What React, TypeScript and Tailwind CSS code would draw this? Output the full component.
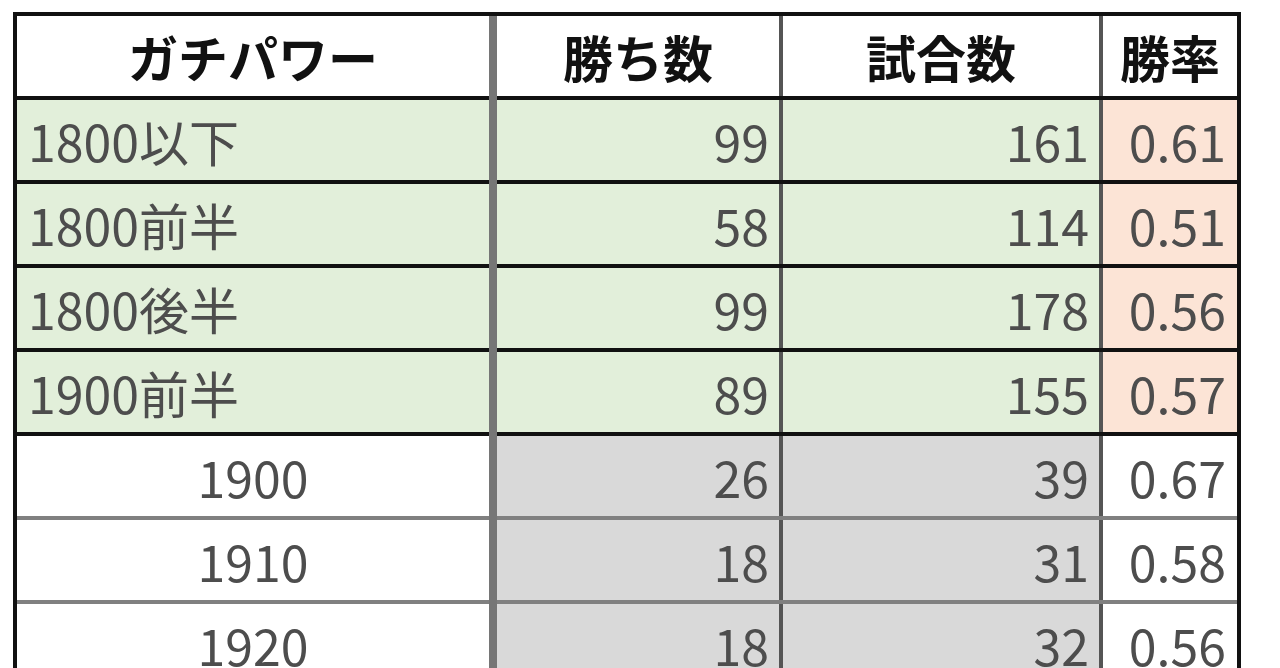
type Row = {
  label: string
  wins: number
  games: number
  rate: string
  tier: 'green' | 'plain'
}

const rows: Row[] = [
  { label: '1800以下', wins: 99, games: 161, rate: '0.61', tier: 'green' },
  { label: '1800前半', wins: 58, games: 114, rate: '0.51', tier: 'green' },
  { label: '1800後半', wins: 99, games: 178, rate: '0.56', tier: 'green' },
  { label: '1900前半', wins: 89, games: 155, rate: '0.57', tier: 'green' },
  { label: '1900', wins: 26, games: 39, rate: '0.67', tier: 'plain' },
  { label: '1910', wins: 18, games: 31, rate: '0.58', tier: 'plain' },
  { label: '1920', wins: 18, games: 32, rate: '0.56', tier: 'plain' },
  { label: '1930', wins: 12, games: 20, rate: '0.60', tier: 'plain' },
]

function Divider() {
  // thick double-ish rule between the first column and the rest
  return <div className="h-[84px] w-[8px] shrink-0 bg-[#767676]" />
}

function HeaderRow() {
  return (
    <div className="flex h-[84px] items-start border-b-4 border-[#111]">
      <div className="flex h-[80px] w-[472px] items-center justify-center bg-white">
        ガチパワー
      </div>
      <Divider />
      <div className="flex h-[80px] w-[286px] items-center justify-center border-r-4 border-[#555] bg-white">
        勝ち数
      </div>
      <div className="flex h-[80px] w-[320px] items-center justify-center border-r-4 border-[#555] bg-white">
        試合数
      </div>
      <div className="flex h-[80px] w-[134px] items-center justify-center bg-white">
        勝率
      </div>
    </div>
  )
}

function DataRow({ row }: { row: Row }) {
  const green = row.tier === 'green'
  return (
    <div
      className={
        green
          ? 'flex h-[84px] items-start border-b-4 border-[#111]'
          : 'flex h-[84px] items-start border-b-4 border-[#808080]'
      }
    >
      {green ? (
        <div className="flex h-[80px] w-[472px] items-center bg-[#e2efda] pl-[11px]">
          {row.label}
        </div>
      ) : (
        <div className="flex h-[80px] w-[472px] items-center justify-center bg-white">
          {row.label}
        </div>
      )}
      <Divider />
      <div
        className={
          green
            ? 'flex h-[80px] w-[286px] items-center justify-end border-r-4 border-[#555] bg-[#e2efda] pr-[10px]'
            : 'flex h-[80px] w-[286px] items-center justify-end border-r-4 border-[#555] bg-[#d9d9d9] pr-[10px]'
        }
      >
        {row.wins}
      </div>
      <div
        className={
          green
            ? 'flex h-[80px] w-[320px] items-center justify-end border-r-4 border-[#555] bg-[#e2efda] pr-[10px]'
            : 'flex h-[80px] w-[320px] items-center justify-end border-r-4 border-[#555] bg-[#d9d9d9] pr-[10px]'
        }
      >
        {row.games}
      </div>
      <div
        className={
          green
            ? 'flex h-[80px] w-[134px] items-center justify-end bg-[#fce4d6] pr-[11px]'
            : 'flex h-[80px] w-[134px] items-center justify-end bg-white pr-[11px]'
        }
      >
        {row.rate}
      </div>
    </div>
  )
}

export default function App() {
  return (
    <div className="h-[668px] w-[1280px] overflow-hidden bg-white pl-[13px] pt-[12px] font-['Noto_Sans_CJK_JP',sans-serif]">
      <div className="w-[1228px] border-4 border-[#111]">
        <div className="text-[50px] leading-none font-bold text-[#111]">
          <HeaderRow />
        </div>
        <div className="text-[50px] leading-none text-[#4d4d4d]">
          {rows.map((row) => (
            <DataRow key={row.label} row={row} />
          ))}
        </div>
      </div>
    </div>
  )
}
